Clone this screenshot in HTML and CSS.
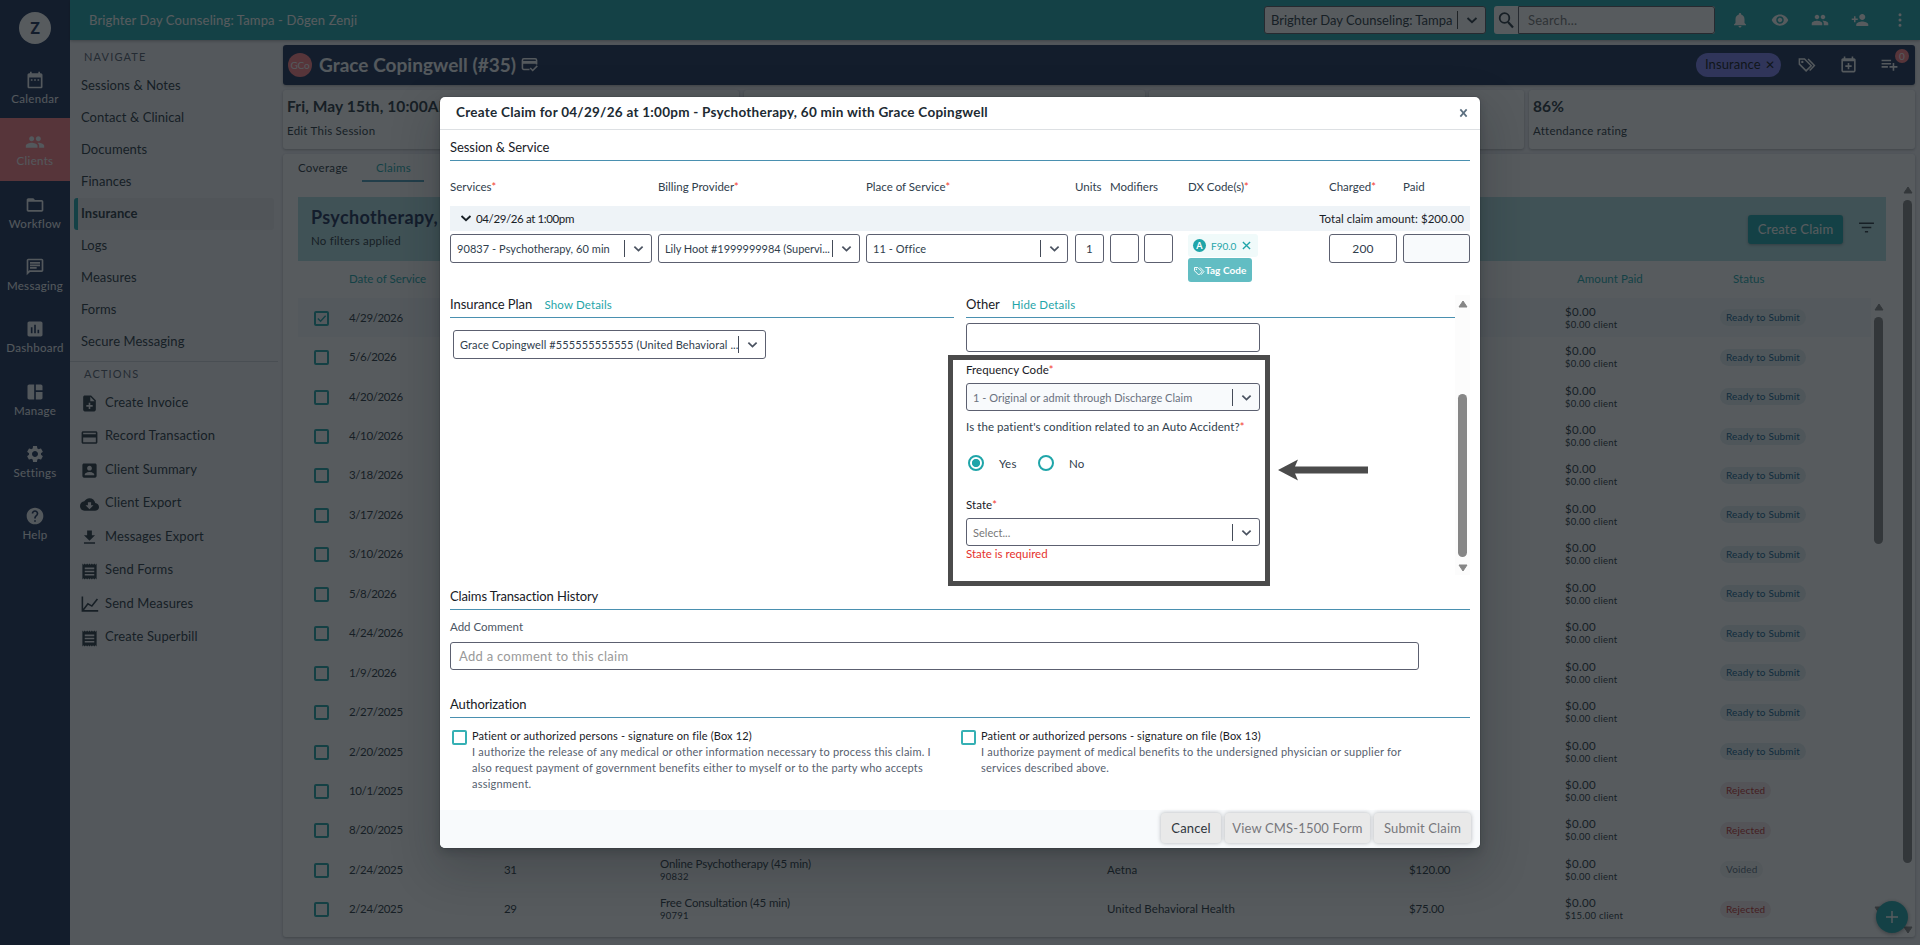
FILE: index.html
```html
<!DOCTYPE html>
<html lang="en">
<head>
<meta charset="utf-8">
<title>Create Claim</title>
<link rel="stylesheet" href="styles.css">
</head>
<body>
<svg class="defs" width="0" height="0">
  <symbol id="i-people" viewBox="0 0 24 24"><path d="M16 11c1.66 0 2.99-1.34 2.99-3S17.66 5 16 5s-3 1.34-3 3 1.34 3 3 3zm-8 0c1.66 0 2.99-1.34 2.99-3S9.66 5 8 5 5 6.34 5 8s1.34 3 3 3zm0 2c-2.33 0-7 1.17-7 3.5V19h14v-2.5c0-2.33-4.67-3.5-7-3.5zm8 0c-.29 0-.62.02-.97.05 1.16.84 1.97 1.97 1.97 3.45V19h6v-2.5c0-2.33-4.67-3.5-7-3.5z"/></symbol>
  <symbol id="i-chev" viewBox="0 0 12 12"><path d="M1.500 4 6 8.200 10.500 4" fill="none" stroke="currentColor" stroke-width="1.900"/></symbol>
  <symbol id="i-receipt" viewBox="0 0 24 24"><path d="M18 17H6v-2h12v2zm0-4H6v-2h12v2zm0-4H6V7h12v2zM3 22l1.500-1.500L6 22l1.500-1.500L9 22l1.500-1.500L12 22l1.500-1.500L15 22l1.500-1.500L18 22l1.500-1.500L21 22V2l-1.500 1.500L18 2l-1.500 1.500L15 2l-1.500 1.500L12 2l-1.500 1.500L9 2 7.500 3.500 6 2 4.500 3.500 3 2v20z"/></symbol>
  <symbol id="i-tags" viewBox="0 0 24 24"><path d="M3 5v6.500l8.500 8.500 6.500-6.500L9.500 5z M14 5l8 8.300-6 6.200" fill="none" stroke="currentColor" stroke-width="1.900"/><circle cx="6.700" cy="8.700" r="1.500"/></symbol>
  <symbol id="i-up" viewBox="0 0 10 8"><path d="M5 1 9 7H1z" stroke="currentColor" stroke-linejoin="round"/></symbol>
</svg>
<div class="app">
  <nav class="rail">
    <div class="logo">Z</div>
    <a class="rail-item"><svg viewBox="0 0 24 24"><path d="M9 11H7v2h2v-2zm4 0h-2v2h2v-2zm4 0h-2v2h2v-2zm2-7h-1V2h-2v2H8V2H6v2H5c-1.110 0-1.990.9-1.990 2L3 20c0 1.100.89 2 2 2h14c1.100 0 2-.9 2-2V6c0-1.100-.9-2-2-2zm0 16H5V9h14v11z"/></svg>Calendar</a>
    <a class="rail-item active"><svg viewBox="0 0 24 24"><use href="#i-people"/></svg>Clients</a>
    <a class="rail-item"><svg viewBox="0 0 24 24"><path d="M20 6h-8l-2-2H4c-1.100 0-1.990.9-1.990 2L2 18c0 1.100.9 2 2 2h16c1.100 0 2-.9 2-2V8c0-1.100-.9-2-2-2zm0 12H4V8h16v10z"/></svg>Workflow</a>
    <a class="rail-item"><svg viewBox="0 0 24 24"><path d="M4 4h16v12H5.170L4 17.170V4m0-2c-1.100 0-1.990.9-1.990 2L2 22l4-4h14c1.100 0 2-.9 2-2V4c0-1.100-.9-2-2-2H4zm2 10h8v2H6v-2zm0-3h12v2H6V9zm0-3h12v2H6V6z"/></svg>Messaging</a>
    <a class="rail-item"><svg viewBox="0 0 24 24"><path d="M19 3H5c-1.100 0-2 .9-2 2v14c0 1.100.9 2 2 2h14c1.100 0 2-.9 2-2V5c0-1.100-.9-2-2-2zM9 17H7v-7h2v7zm4 0h-2V7h2v10zm4 0h-2v-4h2v4z"/></svg>Dashboard</a>
    <a class="rail-item"><svg viewBox="0 0 24 24"><path d="M11 21H5c-1.100 0-2-.9-2-2V5c0-1.100.9-2 2-2h6v18zm2 0h6c1.100 0 2-.9 2-2v-7h-8v9zm8-11V5c0-1.100-.9-2-2-2h-6v7h8z"/></svg>Manage</a>
    <a class="rail-item"><svg viewBox="0 0 24 24"><path d="M19.140 12.940c.04-.3.060-.61.060-.94 0-.32-.02-.64-.07-.94l2.030-1.580c.18-.14.230-.41.120-.61l-1.920-3.320c-.12-.22-.37-.29-.59-.22l-2.390.96c-.5-.38-1.030-.7-1.620-.94l-.36-2.540c-.04-.24-.24-.41-.48-.41h-3.840c-.24 0-.43.17-.47.410l-.36 2.540c-.59.240-1.130.57-1.620.940l-2.390-.96c-.22-.08-.47 0-.59.220L2.740 8.870c-.12.210-.08.470.12.610l2.030 1.580c-.05.300-.09.630-.09.940s.02.640.07.940l-2.030 1.580c-.18.140-.23.410-.12.610l1.920 3.320c.12.220.37.290.59.220l2.390-.96c.5.380 1.030.7 1.620.940l.36 2.540c.05.240.24.410.48.410h3.840c.24 0 .44-.17.470-.41l.36-2.540c.59-.24 1.130-.56 1.620-.94l2.390.96c.22.080.47 0 .59-.22l1.920-3.320c.12-.22.070-.47-.12-.61l-2.010-1.580zM12 15.600c-1.980 0-3.600-1.620-3.600-3.600s1.620-3.600 3.600-3.600 3.600 1.620 3.600 3.600-1.620 3.600-3.600 3.600z"/></svg>Settings</a>
    <a class="rail-item"><svg viewBox="0 0 24 24"><path d="M12 2C6.480 2 2 6.480 2 12s4.480 10 10 10 10-4.480 10-10S17.520 2 12 2zm1 17h-2v-2h2v2zm2.070-7.750-.9.920C13.450 12.900 13 13.500 13 15h-2v-.5c0-1.100.45-2.100 1.170-2.830l1.240-1.260c.37-.36.590-.86.590-1.410 0-1.100-.9-2-2-2s-2 .9-2 2H8c0-2.210 1.790-4 4-4s4 1.790 4 4c0 .88-.36 1.680-.93 2.250z"/></svg>Help</a>
  </nav>
  <div class="main">
    <header class="topbar">
      <span class="org">Brighter Day Counseling: Tampa - Dōgen Zenji</span>
      <div class="top-select"><span>Brighter Day Counseling: Tampa</span><i></i><svg><use href="#i-chev"/></svg></div>
      <div class="search"><b><svg viewBox="0 0 18 18"><circle cx="7.500" cy="7" r="4.800" fill="none" stroke="currentColor" stroke-width="1.800"/><path d="m11 11 5 5.500" stroke="currentColor" stroke-width="2.200"/></svg></b><span>Search...</span></div>
      <div class="top-icons">
        <svg viewBox="0 0 24 24"><path d="M12 22c1.100 0 2-.9 2-2h-4c0 1.100.9 2 2 2zm6-6v-5c0-3.070-1.630-5.640-4.500-6.320V4c0-.83-.67-1.500-1.500-1.500s-1.500.67-1.500 1.500v.68C7.640 5.360 6 7.920 6 11v5l-2 2v1h16v-1l-2-2z"/></svg>
        <svg viewBox="0 0 24 24"><path d="M12 4.500C7 4.500 2.730 7.610 1 12c1.730 4.390 6 7.500 11 7.500s9.270-3.110 11-7.500c-1.730-4.390-6-7.500-11-7.500zM12 17c-2.760 0-5-2.240-5-5s2.240-5 5-5 5 2.240 5 5-2.240 5-5 5zm0-8c-1.660 0-3 1.340-3 3s1.340 3 3 3 3-1.340 3-3-1.340-3-3-3z"/></svg>
        <svg viewBox="0 0 24 24"><use href="#i-people"/></svg>
        <svg viewBox="0 0 24 24"><path d="M15 12c2.210 0 4-1.790 4-4s-1.790-4-4-4-4 1.790-4 4 1.790 4 4 4zm-9-2V7H4v3H1v2h3v3h2v-3h3v-2H6zm9 4c-2.670 0-8 1.340-8 4v2h16v-2c0-2.660-5.330-4-8-4z"/></svg>
        <svg viewBox="0 0 24 24"><path d="M12 7a2 2 0 1 0 0-4 2 2 0 0 0 0 4zm0 3a2 2 0 1 0 0 4 2 2 0 0 0 0-4zm0 7a2 2 0 1 0 0 4 2 2 0 0 0 0-4z"/></svg>
      </div>
    </header>
    <div class="body">
      <aside class="nav">
        <h6>NAVIGATE</h6>
        <a>Sessions &amp; Notes</a><a>Contact &amp; Clinical</a><a>Documents</a><a>Finances</a><a class="on">Insurance</a><a>Logs</a><a>Measures</a><a>Forms</a><a>Secure Messaging</a>
        <hr>
        <h6 class="actions-title">ACTIONS</h6>
        <p><svg viewBox="0 0 24 24"><path d="M14 2H6c-1.100 0-2 .9-2 2v16c0 1.100.89 2 1.990 2H18c1.100 0 2-.9 2-2V8l-6-6zm2 14h-3v3h-2v-3H8v-2h3v-3h2v3h3v2zm-3-7V3.500L18.500 9H13z"/></svg>Create Invoice</p>
        <p><svg viewBox="0 0 24 24"><path d="M20 4H4c-1.110 0-1.990.89-1.990 2L2 18c0 1.110.89 2 2 2h16c1.110 0 2-.89 2-2V6c0-1.110-.89-2-2-2zm0 14H4v-6h16v6zm0-10H4V6h16v2z"/></svg>Record Transaction</p>
        <p><svg viewBox="0 0 24 24"><path d="M3 5v14c0 1.100.89 2 2 2h14c1.100 0 2-.9 2-2V5c0-1.100-.9-2-2-2H5c-1.110 0-2 .9-2 2zm12 4c0 1.660-1.340 3-3 3s-3-1.340-3-3 1.340-3 3-3 3 1.340 3 3zm-9 8c0-2 4-3.100 6-3.100s6 1.100 6 3.100v1H6v-1z"/></svg>Client Summary</p>
        <p><svg viewBox="0 0 24 24"><path d="M19.350 10.040C18.670 6.590 15.640 4 12 4 9.110 4 6.600 5.640 5.350 8.040 2.340 8.360 0 10.910 0 14c0 3.310 2.690 6 6 6h13c2.760 0 5-2.240 5-5 0-2.640-2.050-4.780-4.650-4.960zM17 13l-5 5-5-5h3V9h4v4h3z"/></svg>Client Export</p>
        <p><svg viewBox="0 0 24 24"><path d="M19 9h-4V3H9v6H5l7 7 7-7zM5 18v2h14v-2H5z"/></svg>Messages Export</p>
        <p><svg viewBox="0 0 24 24"><use href="#i-receipt"/></svg>Send Forms</p>
        <p><svg viewBox="0 0 24 24"><path d="M3 2v18h20M4 19l6-8 5 3 7-9" fill="none" stroke="currentColor" stroke-width="2"/></svg>Send Measures</p>
        <p><svg viewBox="0 0 24 24"><use href="#i-receipt"/></svg>Create Superbill</p>
      </aside>
      <div class="content">
        <section class="client">
          <div class="avatar">GCo</div><h1>Grace Copingwell (#35)</h1>
          <svg class="card-ic" viewBox="0 0 24 24"><path d="M12 19H4a2 2 0 0 1-2-2V6a2 2 0 0 1 2-2h16a2 2 0 0 1 2 2v6M13 17l3.500 3.500L23 14" fill="none" stroke="currentColor" stroke-width="2.200"/><path d="M2 7h20v4H2z"/></svg>
          <div class="pill">Insurance <span>✕</span></div>
          <svg class="hi" viewBox="0 0 24 24"><use href="#i-tags"/></svg>
          <svg class="hi" viewBox="0 0 24 24"><path d="M19 4h-1V2h-2v2H8V2H6v2H5c-1.100 0-2 .9-2 2v14c0 1.100.9 2 2 2h14c1.100 0 2-.9 2-2V6c0-1.100-.9-2-2-2zm0 16H5V8h14v12zM11 10h2v3h3v2h-3v3h-2v-3H8v-2h3z"/></svg>
          <div class="badge-wrap"><svg class="hi" viewBox="0 0 24 24"><path d="M14 10H2v2h12v-2zm0-4H2v2h12V6zm4 8v-4h-2v4h-4v2h4v4h2v-4h4v-2h-4zM2 16h8v-2H2v2z"/></svg><em>0</em></div>
        </section>
        <section class="stats">
          <div><b>Fri, May 15th, 10:00AM</b><span>Edit This Session</span></div><div></div><div></div><div><b>86%</b><span>Attendance rating</span></div>
        </section>
        <section class="claims">
          <div class="claims-main">
            <div class="tabs"><span>Coverage</span><span class="sel">Claims</span></div>
            <div class="banner"><div><h2>Psychotherapy,</h2><span>No filters applied</span></div><button>Create Claim</button>
              <svg viewBox="0 0 16 12"><path d="M1 2h14M3.500 6h9M6.500 10h3" stroke="currentColor" stroke-width="1.500"/></svg></div>
            <div class="row head"><span class="date">Date of Service</span><span class="chg">Charged</span><span class="paid">Amount Paid</span><span class="status">Status</span></div>
            <div class="table">
              <div class="rows">
                <div class="row picked"><i class="box"><svg viewBox="0 0 12 12"><path d="m2 6 3 3 5.500-6" fill="none" stroke="currentColor" stroke-width="1.500"/></svg></i><span class="date">4/29/2026</span><span class="paid">$0.00<small>$0.00 client</small></span><em class="ready">Ready to Submit</em></div>
                <div class="row"><i class="box"></i><span class="date">5/6/2026</span><span class="paid">$0.00<small>$0.00 client</small></span><em class="ready">Ready to Submit</em></div>
                <div class="row"><i class="box"></i><span class="date">4/20/2026</span><span class="paid">$0.00<small>$0.00 client</small></span><em class="ready">Ready to Submit</em></div>
                <div class="row"><i class="box"></i><span class="date">4/10/2026</span><span class="paid">$0.00<small>$0.00 client</small></span><em class="ready">Ready to Submit</em></div>
                <div class="row"><i class="box"></i><span class="date">3/18/2026</span><span class="paid">$0.00<small>$0.00 client</small></span><em class="ready">Ready to Submit</em></div>
                <div class="row"><i class="box"></i><span class="date">3/17/2026</span><span class="paid">$0.00<small>$0.00 client</small></span><em class="ready">Ready to Submit</em></div>
                <div class="row"><i class="box"></i><span class="date">3/10/2026</span><span class="paid">$0.00<small>$0.00 client</small></span><em class="ready">Ready to Submit</em></div>
                <div class="row"><i class="box"></i><span class="date">5/8/2026</span><span class="paid">$0.00<small>$0.00 client</small></span><em class="ready">Ready to Submit</em></div>
                <div class="row"><i class="box"></i><span class="date">4/24/2026</span><span class="paid">$0.00<small>$0.00 client</small></span><em class="ready">Ready to Submit</em></div>
                <div class="row"><i class="box"></i><span class="date">1/9/2026</span><span class="paid">$0.00<small>$0.00 client</small></span><em class="ready">Ready to Submit</em></div>
                <div class="row"><i class="box"></i><span class="date">2/27/2025</span><span class="paid">$0.00<small>$0.00 client</small></span><em class="ready">Ready to Submit</em></div>
                <div class="row"><i class="box"></i><span class="date">2/20/2025</span><span class="paid">$0.00<small>$0.00 client</small></span><em class="ready">Ready to Submit</em></div>
                <div class="row"><i class="box"></i><span class="date">10/1/2025</span><span class="paid">$0.00<small>$0.00 client</small></span><em class="rejected">Rejected</em></div>
                <div class="row"><i class="box"></i><span class="date">8/20/2025</span><span class="paid">$0.00<small>$0.00 client</small></span><em class="rejected">Rejected</em></div>
                <div class="row"><i class="box"></i><span class="date">2/24/2025</span><span class="num">31</span><span class="svc">Online Psychotherapy (45 min)<small>90832</small></span><span class="payer">Aetna</span><span class="chg">$120.00</span><span class="paid">$0.00<small>$0.00 client</small></span><em class="voided">Voided</em></div>
                <div class="row"><i class="box"></i><span class="date">2/24/2025</span><span class="num">29</span><span class="svc">Free Consultation (45 min)<small>90791</small></span><span class="payer">United Behavioral Health</span><span class="chg">$75.00</span><span class="paid">$0.00<small>$15.00 client</small></span><em class="rejected">Rejected</em></div>
              </div>
              <div class="scroll inner"><svg><use href="#i-up"/></svg><b></b><svg class="down"><use href="#i-up"/></svg></div>
            </div>
          </div>
          <div class="scroll outer"><svg><use href="#i-up"/></svg><b></b><svg class="down"><use href="#i-up"/></svg></div>
        </section>
      </div>
    </div>
  </div>
  <div class="fab"><svg viewBox="0 0 12 12"><path d="M6 0v12M0 6h12" stroke="currentColor" stroke-width="1.400"/></svg></div>
</div>

<div class="backdrop">
  <div class="dialog">
    <header><span class="dlg-title">Create Claim for 04/29/26 at 1:00pm - Psychotherapy, 60 min with Grace Copingwell</span><svg viewBox="0 0 10 10"><path d="m1.500 1 7 8m0-8-7 8" stroke="currentColor" stroke-width="1.900"/></svg></header>
    <div class="dlg-body">
      <h3 class="rule">Session &amp; Service</h3>
      <div class="svc-grid labels"><span>Services<u>*</u></span><span>Billing Provider<u>*</u></span><span>Place of Service<u>*</u></span><span>Units</span><span class="mods">Modifiers</span><span>DX Code(s)<u>*</u></span><span>Charged<u>*</u></span><span>Paid</span></div>
      <div class="group"><svg><use href="#i-chev"/></svg><span class="when">04/29/26 at 1:00pm</span><span class="total">Total claim amount: $200.00</span></div>
      <div class="svc-grid fields">
        <div class="select"><span>90837 - Psychotherapy, 60 min</span><i></i><svg><use href="#i-chev"/></svg></div>
        <div class="select lily"><span>Lily Hoot #1999999984 (Supervi...</span><i></i><svg><use href="#i-chev"/></svg></div>
        <div class="select"><span>11 - Office</span><i></i><svg><use href="#i-chev"/></svg></div>
        <div class="input">1</div><div class="input"></div><div class="input"></div>
        <div class="dx"><div class="chip"><b>A</b><span>F90.0</span><svg viewBox="0 0 10 10"><path d="m1 1 8 8m0-8-8 8" stroke="currentColor" stroke-width="1.500"/></svg></div><div class="tag"><svg viewBox="0 0 24 24"><use href="#i-tags"/></svg>Tag Code</div></div>
        <div class="input">200</div><div class="input off"></div>
      </div>
      <div class="split">
        <div class="plan">
          <h3 class="rule">Insurance Plan <a>Show Details</a></h3>
          <div class="select wide"><span>Grace Copingwell #555555555555 (United Behavioral ...</span><i></i><svg><use href="#i-chev"/></svg></div>
        </div>
        <div class="other">
          <h3 class="rule">Other <a>Hide Details</a></h3>
          <div class="input"></div>
          <div class="callout">
            <label>Frequency Code<u>*</u></label>
            <div class="select off"><span>1 - Original or admit through Discharge Claim</span><i></i><svg><use href="#i-chev"/></svg></div>
            <p class="question">Is the patient's condition related to an Auto Accident?<u>*</u></p>
            <div class="radios"><i class="on"></i><span>Yes</span><i></i><span>No</span></div>
            <label>State<u>*</u></label>
            <div class="select ph"><span>Select...</span><i></i><svg><use href="#i-chev"/></svg></div>
            <p class="error">State is required</p>
          </div>
          <svg class="arrow" viewBox="0 0 90 22"><path d="M0 11 20 0.500 17 7.500H90v7H17l3 7z"/></svg>
        </div>
        <div class="scroll dlg-scroll"><svg><use href="#i-up"/></svg><b></b><svg class="down"><use href="#i-up"/></svg></div>
      </div>
      <h3 class="rule history">Claims Transaction History</h3>
      <p class="cmt-label">Add Comment</p>
      <div class="comment">Add a comment to this claim</div>
      <h3 class="rule auth-title">Authorization</h3>
      <div class="auth">
        <div><i></i><p><b>Patient or authorized persons - signature on file (Box 12)</b><br>I authorize the release of any medical or other information necessary to process this claim. I<br>also request payment of government benefits either to myself or to the party who accepts<br>assignment.</p></div>
        <div><i></i><p><b>Patient or authorized persons - signature on file (Box 13)</b><br>I authorize payment of medical benefits to the undersigned physician or supplier for<br>services described above.</p></div>
      </div>
    </div>
    <footer><button class="cancel">Cancel</button><button class="view">View CMS-1500 Form</button><button class="submit">Submit Claim</button></footer>
  </div>
</div>
</body>
</html>
```
FILE: styles.css
```css
* { box-sizing: border-box; }
body { margin: 0; font-family: Lato, "Noto Sans", sans-serif; font-size: 11px; letter-spacing: .2px; color: #293742; overflow: hidden; height: 945px; }
h1, h2, h3, h6, p { margin: 0; font-weight: 400; }
svg { fill: currentColor; flex: none; }
i, em, u { font-style: normal; text-decoration: none; }
span { white-space: nowrap; }
.defs { position: absolute; }

.app { display: flex; width: 1920px; height: 945px; background: #f5f5f9; }
.rail { width: 70px; background: #1d3159; color: #f2f4f8; flex: none; }
.logo { width: 32px; height: 32px; margin: 12px auto 12px 19px; border-radius: 50%; background: #fff; color: #1d3159; font: 700 16px/33px Roboto, sans-serif; text-align: center; letter-spacing: 0; }
.rail-item { display: flex; flex-direction: column; align-items: center; height: 62.300px; padding-top: 14px; font-size: 11.500px; line-height: 14px; letter-spacing: .3px; gap: 2px; }
.rail-item svg { width: 20px; height: 20px; }
.rail-item.active { background: #ff7f86; height: 63px; margin-bottom: -.7px; }
.main { flex: 1; min-width: 0; }
.topbar { height: 40px; background: #21a9ae; display: flex; align-items: center; color: #fff; box-shadow: 0 1px 3px rgba(0,0,0,.3); position: relative; }
.org { width: 1174px; padding-left: 19px; font-size: 13px; letter-spacing: .14px; }
.top-select { display: flex; align-items: center; width: 222px; height: 28px; border: 1px solid #5c5c66; border-radius: 3px; background: #fff; color: #293742; padding-left: 6px; margin-left: 20px; font-size: 13px; letter-spacing: 0; }
.top-select span { width: 186px; }
.top-select i { width: 1px; height: 18px; background: #444; margin-right: 8px; }
.top-select svg { width: 12px; height: 12px; }
.search { display: flex; width: 221px; height: 28px; margin-left: 8px; background: #fff; border-radius: 3px; color: #293742; }
.search b { width: 24px; padding: 5px 3px; }
.search b svg { width: 18px; height: 18px; display: block; }
.search span { flex: 1; border: 1px solid #5c5c66; border-radius: 0 3px 3px 0; padding-left: 9px; color: #777; font-size: 13px; line-height: 26px; }
.top-icons { display: flex; gap: 22px; margin-left: 16px; }
.top-icons svg { width: 18px; height: 18px; }

.body { display: flex; }
.nav { width: 208px; padding: 9px 0 0 4px; flex: none; }
.nav h6 { font-size: 11px; line-height: 16px; letter-spacing: 1.150px; color: #56606e; padding-left: 10px; margin-bottom: 5px; }
.nav a { display: block; height: 32px; line-height: 31px; padding-left: 7px; font-size: 13px; letter-spacing: .07px; }
.nav a.on { width: 200px; border-left: 4px solid #21a9ae; border-radius: 3px; background: #e9eaee; padding-left: 3px; font-weight: 700; }
.nav hr { border: 0; height: 1px; background: #cfd3da; margin: 3px 0 4px -4px; }
.nav .actions-title { margin-bottom: 3px; }
.nav p { height: 33.500px; display: flex; align-items: center; gap: 6px; padding-left: 6px; font-size: 13px; letter-spacing: .12px; }
.nav p svg { width: 19px; height: 19px; position: relative; top: 2px; }

.content { width: 1632px; margin: 5px 0 0 5px; }
.client { height: 40px; background: #1d3159; border-radius: 3px; display: flex; align-items: center; color: #f5f8fa; padding: 0 0 1px 5px; box-shadow: 0 1px 3px rgba(0,0,0,.3); }
.avatar { width: 24px; height: 24px; border-radius: 50%; background: #ff7f86; font-size: 10px; line-height: 24px; text-align: center; letter-spacing: -.2px; }
.client h1 { font-size: 19px; font-weight: 700; margin-left: 7px; letter-spacing: .03px; }
.card-ic { width: 17px; height: 17px; margin-left: 5px; }
.pill { margin-left: auto; width: 85px; height: 24px; border-radius: 12px; background: #7d80f2; color: #10161a; font-size: 13px; line-height: 22px; padding-left: 9px; letter-spacing: .08px; white-space: nowrap; }
.pill span { font-size: 12px; margin-left: 1px; }
.hi { width: 19px; height: 19px; display: block; }
.pill + .hi { margin: 0 23px 0 16px; }
.badge-wrap { position: relative; margin: 0 16px 0 22px; }
.badge-wrap em { position: absolute; left: 15px; top: -6px; width: 14px; height: 14px; border-radius: 50%; background: #ff7f86; font-size: 10px; line-height: 14px; text-align: center; }
.stats { display: grid; grid-template-columns: 456px 401px 375px 386px; justify-content: space-between; margin: 5px 0; }
.stats div { height: 59px; background: #fff; border-radius: 3px; box-shadow: 0 1px 3px rgba(16,22,26,.3); padding: 6px 4px 0; }
.stats b { display: block; font-size: 15.500px; line-height: 20px; letter-spacing: .1px; white-space: nowrap; }
.stats span { font-size: 11.500px; line-height: 30px; letter-spacing: .25px; }
.claims { height: 783px; background: #fff; border-radius: 3px; display: flex; box-shadow: 0 1px 3px rgba(16,22,26,.3); }
.claims-main { width: 1588px; margin-left: 15px; }
.tabs { display: flex; height: 43px; font-size: 11.500px; line-height: 28px; letter-spacing: .3px; }
.tabs .sel { margin-left: 14px; padding-left: 14px; width: 62px; height: 28px; color: #21a9ae; border-bottom: 2px solid #4f9dbb; }
.banner { height: 64px; background: #b3dfe3; display: flex; align-items: center; padding-left: 13px; }
.banner h2 { font-size: 18px; font-weight: 700; line-height: 24px; color: #1d3159; letter-spacing: .35px; }
.banner > div { flex: 1; }
.banner span { font-size: 11.500px; line-height: 24px; letter-spacing: .2px; display: block; }
.banner button { width: 95px; height: 29px; border: 0; border-radius: 3px; background: #21a9ae; color: #fff; font: 13px Lato, sans-serif; letter-spacing: .2px; box-shadow: 0 1px 3px rgba(0,0,0,.3); padding: 0; }
.banner svg { width: 17px; height: 13px; margin: 0 11px 4px 15px; }
.row { display: grid; grid-template-columns: 16px 35px 155px 156px 447px 302px 156px 155px 1fr; height: 39.450px; align-items: center; font-size: 11.500px; letter-spacing: .2px; line-height: 14px; }
.row .box { grid-column: 2; grid-row: 1; width: 15px; height: 15px; border: 2px solid #1fa5a9; border-radius: 2px; margin-top: 1px; color: #1fa5a9; }
.box svg { display: block; width: 11px; height: 11px; }
.row > span, .row > em { grid-row: 1; }
.row .date { grid-column: 3; letter-spacing: -.38px; }
.row .num { grid-column: 4; letter-spacing: -.3px; }
.row .svc { grid-column: 5; letter-spacing: -.12px; }
.row .payer { grid-column: 6; letter-spacing: .05px; }
.row .chg { grid-column: 7; letter-spacing: -.2px; }
.row .paid { grid-column: 8; letter-spacing: .35px; }
.row em, .row .status { grid-column: 9; justify-self: start; }
.row small { display: block; font-size: 9.500px; line-height: 12px; letter-spacing: .25px; }
.row em { height: 17px; border-radius: 9px; padding: 0 6px; font-size: 10px; line-height: 16px; letter-spacing: .15px; }
.ready { background: #e4eff2; color: #10628f; }
.rejected { background: #f3e8ea; color: #c23030; }
.voided { background: #f0f3f5; color: #5c7080; }
.row.head { height: 37px; color: #21a9ae; padding-bottom: 1px; }
.row.head .date { letter-spacing: 0; }
.row.head .chg { letter-spacing: .1px; }
.row.head .paid { padding-left: 12px; letter-spacing: .05px; }
.row.head .status { padding-left: 13px; letter-spacing: .05px; }
.picked { background: #f6f8fa; }
.table { display: flex; }
.rows { width: 1573px; }
.scroll { color: #868686; width: 15px; display: flex; flex-direction: column; align-items: center; }
.scroll svg { width: 10px; height: 8px; }
.scroll b { width: 9px; border-radius: 5px; background: #868686; }
.scroll .down { transform: rotate(180deg); margin-top: auto; }
.inner { height: 616px; padding-top: 5px; }
.inner b { height: 227px; margin-top: 6px; }
.outer { height: 748px; margin: 32px 0 0 14px; }
.outer b { height: 663px; margin-top: 6px; }
.fab { position: absolute; left: 1876px; top: 901px; width: 32px; height: 32px; border-radius: 50%; background: #21a9ae; color: #fff; box-shadow: 0 1px 4px rgba(0,0,0,.4); padding: 10px; }
.fab svg { width: 12px; height: 12px; display: block; }

.backdrop { position: absolute; inset: 0; background: rgba(16,22,26,.7); padding: 97px 0 0 440px; overflow: hidden; }
.dialog { width: 1040px; height: 751px; background: #fff; border-radius: 5px; color: #30404d; box-shadow: 0 0 0 1px rgba(16,22,26,.1), 0 4px 8px rgba(16,22,26,.2), 0 18px 46px 6px rgba(16,22,26,.2); display: flex; flex-direction: column; overflow: hidden; }
.dialog header { height: 33px; border-bottom: 1px solid #dde0e3; display: flex; align-items: center; justify-content: space-between; padding: 0 12px 2px 16px; }
.dlg-title { font-weight: 700; font-size: 13.500px; letter-spacing: .26px; color: #202a32; }
.dialog header svg { width: 9px; height: 10px; color: #5c7080; position: relative; top: 1px; }
.dlg-body { height: 680px; padding: 6px 10px 0; flex: none; }
.rule { font-size: 13px; line-height: 23px; height: 25px; border-bottom: 1px solid #4a90b0; color: #182026; letter-spacing: -.05px; }
.rule a { color: #1fa5a9; font-size: 11.500px; margin-left: 9px; letter-spacing: .15px; }
u { color: #f23a2f; font-size: 11px; }
.svc-grid { display: grid; grid-template-columns: 208px 208px 209px 35px 34px 44px 141px 74px 67px; }
.labels { height: 45px; padding-top: 18px; line-height: 16px; font-size: 11.500px; letter-spacing: 0; }
.labels .mods { grid-column: 5 / 7; }
.group { height: 25px; background: #eef3f7; display: flex; align-items: center; padding: 0 6px 1px 10px; font-size: 11.500px; letter-spacing: .05px; color: #182026; }
.group svg { width: 12px; height: 12px; margin-right: 4px; }
.group .when { letter-spacing: -.38px; }
.group .total { margin-left: auto; }
.fields { height: 64px; padding-top: 3px; align-items: start; }
.select { display: flex; align-items: center; width: 202px; height: 29px; border: 1px solid #5c6070; border-radius: 3px; background: #fff; font-size: 11px; padding-left: 6px; letter-spacing: .06px; }
.lily { letter-spacing: -.05px; }
.select span { flex: 1; min-width: 0; }
.select i { width: 1px; height: 17px; background: #444b58; flex: none; }
.select svg { width: 11px; height: 11px; margin: 0 7px 0 8px; color: #4a5260; }
.select.off, .input.off { background: #f8fafc; color: #6b7280; }
.input { width: 29px; height: 29px; border: 1px solid #5c6070; border-radius: 3px; text-align: center; line-height: 28px; font-size: 11.500px; }
.fields .input:nth-child(n+8) { width: 68px; font-size: 12px; }
.fields .input:last-child { width: 67px; }
.dx { width: 70px; }
.chip { display: flex; align-items: center; height: 23px; background: #f0fafa; border-radius: 3px; padding-left: 5px; color: #1fa5a9; font-size: 10px; letter-spacing: 0; margin-bottom: 1px; }
.chip b { width: 13px; height: 13px; border-radius: 50%; background: #1fa5a9; color: #fff; font-size: 9px; line-height: 13px; text-align: center; margin-right: 5px; }
.chip span { width: 31px; }
.chip svg { width: 9px; height: 9px; }
.tag { width: 64px; height: 24px; border-radius: 3px; background: #62bdc3; color: #fff; font-weight: 700; font-size: 10px; letter-spacing: .05px; line-height: 22px; display: flex; align-items: center; padding: 0 0 1px 5px; white-space: nowrap; }
.tag svg { width: 12px; height: 12px; margin-top: 3px; }
.split { display: flex; height: 280px; }
.plan { width: 504px; }
.plan .rule, .other .rule { height: 23px; line-height: 18px; }
.wide { width: 313px; margin: 12px 0 0 3px; letter-spacing: .1px; }
.other { width: 489px; margin-left: 12px; position: relative; }
.other > .input { width: 294px; margin-top: 5px; }
.callout { width: 322px; height: 231px; margin: 3px 0 0 -18px; border: 5px solid #4b4b4b; padding: 2px 0 0 13px; }
.callout .select { width: 294px; height: 28px; letter-spacing: .02px; }
.callout label { display: block; font-size: 11.500px; line-height: 16px; height: 21px; color: #182026; letter-spacing: .05px; }
.question { font-size: 11.500px; line-height: 16px; margin-top: 8px; letter-spacing: .08px; }
.radios { display: flex; align-items: center; height: 56px; margin-bottom: 6px; font-size: 11.500px; padding-left: 2px; }
.radios i { width: 16px; height: 16px; border: 2px solid #1fa5a9; border-radius: 50%; margin-right: 15px; }
.radios i.on { background: radial-gradient(circle, #1fa5a9 3.700px, #fff 4.500px); }
.radios span { width: 39px; }
.select.ph { color: #777; }
.error { color: #e5322d; font-size: 11.500px; line-height: 16px; letter-spacing: 0; }
.arrow { position: absolute; left: 312px; top: 164px; width: 90px; height: 22px; color: #4b4b4b; }
.dlg-scroll { height: 280px; background: #fcfcfc; padding: 5px 0 3px; }
.dlg-scroll b { height: 163px; margin-top: 86px; }
.history { margin-top: 10px; letter-spacing: -.12px; }
.cmt-label { font-size: 11.500px; line-height: 16px; margin: 9px 0 7px; color: #4b5563; letter-spacing: 0; }
.comment { width: 969px; height: 28px; border: 1px solid #5c6070; border-radius: 3px; color: #999; font-size: 13px; line-height: 26px; padding-left: 8px; letter-spacing: .27px; }
.auth-title { margin-top: 23px; letter-spacing: -.1px; }
.auth { display: flex; padding: 10px 0 0 2px; }
.auth > div { width: 511px; display: flex; gap: 5px; font-size: 11px; line-height: 16px; color: #56606e; letter-spacing: .22px; white-space: nowrap; }
.auth i { width: 15px; height: 15px; border: 2px solid #35b0b4; border-radius: 2px; margin-top: 2px; flex: none; }
.auth b { font-weight: 400; color: #182026; letter-spacing: .14px; }
.dialog footer { flex: 1; background: #f8fafc; display: flex; justify-content: flex-end; gap: 4px; padding: 3px 9px 0 0; }
footer button { height: 30px; border: 0; border-radius: 4px; background: #e9e9e9; color: #77777c; font: 13px Lato, sans-serif; letter-spacing: .15px; box-shadow: 0 0 4px rgba(16,22,26,.3); padding: 0; }
.view { width: 145px; }
.submit { width: 97px; }
.dialog .cancel { width: 60px; color: #30353c; }
```
